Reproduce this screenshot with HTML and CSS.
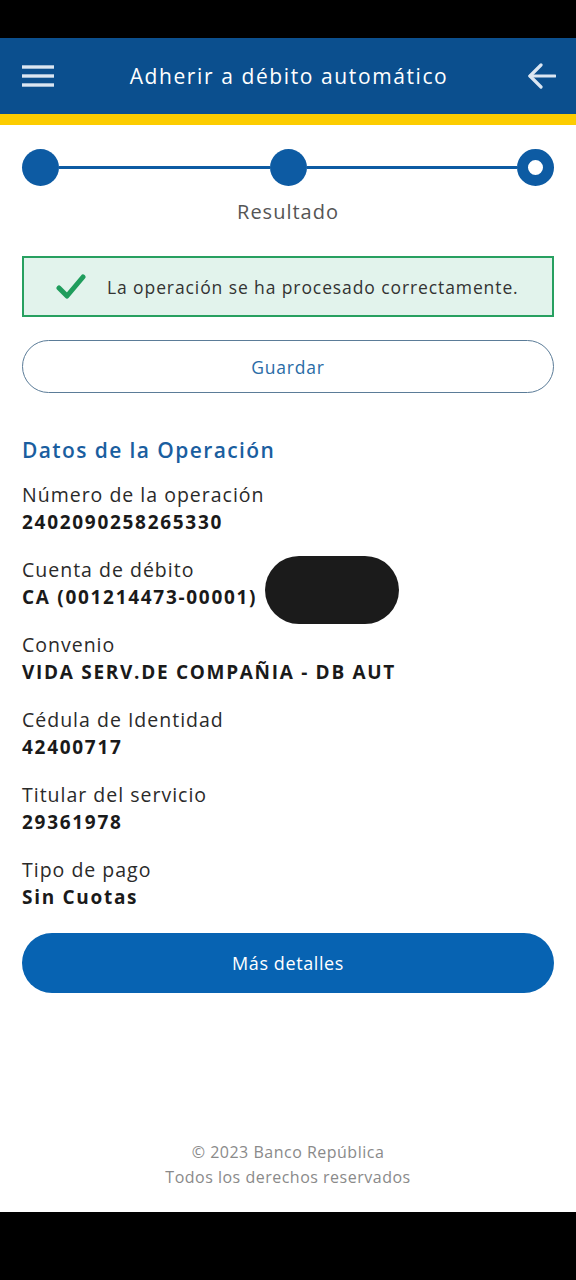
FILE: index.html
```html
<!DOCTYPE html>
<html lang="es">
<head>
<meta charset="utf-8">
<title>Adherir a débito automático</title>
<link rel="stylesheet" href="styles.css">
</head>
<body>
<div class="statusbar"></div>
<header class="appbar">
  <button class="icon-btn" aria-label="Menú">
    <svg width="32" height="24" viewBox="0 0 32 24"><g stroke="#dbe6f2" stroke-width="3.4" stroke-linecap="butt"><line x1="0" y1="3" x2="32" y2="3"/><line x1="0" y1="12" x2="32" y2="12"/><line x1="0" y1="21" x2="32" y2="21"/></g></svg>
  </button>
  <h1 class="appbar-title">Adherir a débito automático</h1>
  <button class="icon-btn" aria-label="Volver">
    <svg width="28" height="26" viewBox="0 0 28 26"><g fill="none" stroke="#dbe6f2" stroke-width="3.2" stroke-linecap="round" stroke-linejoin="round"><line x1="2" y1="13" x2="27" y2="13"/><polyline points="13,2 2,13 13,24"/></g></svg>
  </button>
</header>
<div class="stripe"></div>
<main class="content">
  <div class="stepper">
    <div class="steps">
      <span class="dot"></span>
      <span class="bar"></span>
      <span class="dot"></span>
      <span class="bar"></span>
      <span class="dot current"></span>
    </div>
    <p class="step-label">Resultado</p>
  </div>

  <div class="alert">
    <svg class="check" width="30" height="26" viewBox="0 0 30 26"><polyline points="3,14 11,22 27,3" fill="none" stroke="#1f9d5c" stroke-width="5" stroke-linecap="round" stroke-linejoin="round"/></svg>
    <span>La operación se ha procesado correctamente.</span>
  </div>

  <button class="btn-outline">Guardar</button>

  <h2 class="section-title">Datos de la Operación</h2>

  <dl class="fields">
    <div class="field"><dt>Número de la operación</dt><dd>2402090258265330</dd></div>
    <div class="field redacted"><dt>Cuenta de débito</dt><dd>CA (001214473-00001)</dd><span class="blot"></span></div>
    <div class="field"><dt>Convenio</dt><dd>VIDA SERV.DE COMPAÑIA - DB AUT</dd></div>
    <div class="field"><dt>Cédula de Identidad</dt><dd>42400717</dd></div>
    <div class="field"><dt>Titular del servicio</dt><dd>29361978</dd></div>
    <div class="field"><dt>Tipo de pago</dt><dd>Sin Cuotas</dd></div>
  </dl>

  <button class="btn-primary">Más detalles</button>
</main>
<footer class="footer">
  <p>© 2023 Banco República</p>
  <p>Todos los derechos reservados</p>
</footer>
<div class="navbar"></div>
</body>
</html>
```
FILE: styles.css
```css
* { box-sizing: border-box; }
html, body { margin: 0; padding: 0; }
body {
  width: 576px;
  min-height: 1280px;
  display: flex;
  flex-direction: column;
  background: #fff;
  font-family: "Open Sans", "Liberation Sans", sans-serif;
  color: #222;
}
.statusbar { height: 38px; background: #000; }
.appbar {
  height: 76px;
  background: #0b4f8e;
  display: flex;
  align-items: center;
  justify-content: space-between;
  padding: 0 20px 0 22px;
}
.icon-btn {
  background: none; border: 0; padding: 0;
  display: flex; align-items: center; justify-content: center;
}
.appbar-title {
  margin: 0 0 0 -4px;
  font-size: 21px;
  font-weight: 400;
  color: #fff;
  letter-spacing: 1.6px;
}
.stripe { height: 11px; background: #fccc00; }
.content {
  flex: 1;
  padding: 24px 22px 0;
  display: flex;
  flex-direction: column;
}
.stepper { display: flex; flex-direction: column; align-items: center; }
.steps { display: flex; align-items: center; width: 100%; }
.dot {
  width: 37px; height: 37px; border-radius: 50%;
  background: #0d5ba3; flex: none;
}
.dot.current { background: #fff; border: 11px solid #0d5ba3; }
.bar { flex: 1; height: 3px; background: #0d5ba3; }
.step-label {
  margin: 12px 0 0;
  font-size: 20px;
  color: #555;
  letter-spacing: 1px;
}
.alert {
  margin-top: 31px;
  height: 61px;
  border: 2px solid #27a060;
  background: #e2f3ec;
  display: flex;
  align-items: center;
  padding-left: 32px;
  gap: 21px;
  font-size: 17.5px;
  color: #333;
  letter-spacing: 0.9px;
}
.check { flex: none; }
.btn-outline {
  margin-top: 23px;
  height: 53px;
  border: 1px solid #5b7c98;
  border-radius: 27px;
  background: #fff;
  font: inherit;
  font-size: 17.5px;
  color: #2a6ba6;
  letter-spacing: 0.8px;
}
.section-title {
  margin: 43px 0 0;
  font-size: 21px;
  font-weight: 600;
  color: #1a5e9f;
  letter-spacing: 1.4px;
}
.fields { margin: 17px 0 0; display: flex; flex-direction: column; gap: 20px; }
.field { position: relative; }
.field dt { font-size: 19.5px; color: #2a2a2a; line-height: 28px; letter-spacing: 1px; }
.field dd { margin: 0; font-size: 19px; font-weight: 700; color: #1a1a1a; line-height: 27px; letter-spacing: 1.7px; }
.blot {
  position: absolute;
  left: 243px; top: 0;
  width: 134px; height: 68px;
  border-radius: 34px;
  background: #1b1b1b;
}
.btn-primary {
  margin-top: 22px;
  height: 60px;
  border: 0;
  border-radius: 30px;
  background: #0763b2;
  color: #fff;
  font: inherit;
  font-size: 18px;
  letter-spacing: 0.6px;
}
.footer {
  padding-bottom: 22px;
  text-align: center;
  color: #8a8a8a;
  font-size: 16px;
  line-height: 25px;
  letter-spacing: 0.5px;
}
.footer p { margin: 0; }
.navbar { height: 68px; background: #000; }
```
